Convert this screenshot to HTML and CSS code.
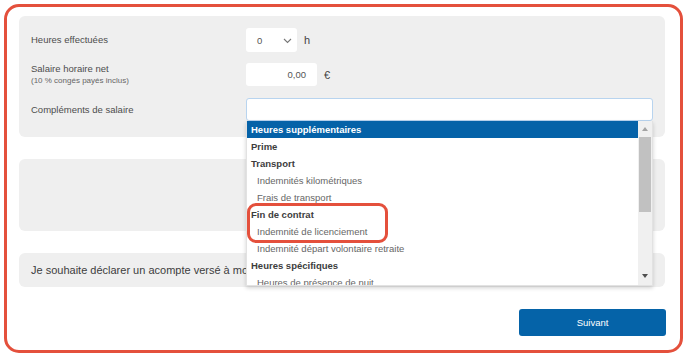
FILE: index.html
```html
<!DOCTYPE html>
<html lang="fr">
<head>
	<meta charset="UTF-8">
	<title>Salaire</title>
	<link rel="stylesheet" href="styles.css">
</head>
<body>
	<div class="frame">
		<div class="card form">
			<div class="row">
				<div class="label">Heures effectuées</div>
				<div class="field">
					<div class="select">0
						<svg class="chev" width="9" height="6" viewBox="0 0 9 6"><path d="M1 1l3.5 3.5L8 1" fill="none" stroke="#777" stroke-width="1.1"/></svg>
					</div>
					<span class="unit">h</span>
				</div>
			</div>
			<div class="row">
				<div class="label">Salaire horaire net<small>(10 % congés payés inclus)</small></div>
				<div class="field">
					<div class="input num">0,00</div>
					<span class="unit">€</span>
				</div>
			</div>
			<div class="row">
				<div class="label">Compléments de salaire</div>
				<div class="field combo">
					<div class="input wide"></div>
					<div class="dropdown">
						<ul class="options">
							<li class="group cur">Heures supplémentaires</li>
							<li class="group">Prime</li>
							<li class="group">Transport</li>
							<li class="opt">Indemnités kilométriques</li>
							<li class="opt">Frais de transport</li>
							<li class="group">Fin de contrat</li>
							<li class="opt">Indemnité de licenciement</li>
							<li class="opt">Indemnité départ volontaire retraite</li>
							<li class="group">Heures spécifiques</li>
							<li class="opt">Heures de présence de nuit</li>
						</ul>
						<div class="scroll">
							<span class="arrow up"></span>
							<span class="thumb"></span>
							<span class="arrow down"></span>
						</div>
						<div class="mark"></div>
					</div>
				</div>
			</div>
		</div>
		<div class="card empty"></div>
		<div class="card acompte">Je souhaite déclarer un acompte versé à mon salarié</div>
		<div class="actions"><button class="next">Suivant</button></div>
	</div>
</body>
</html>
```

FILE: styles.css
```css
/*reset*/
body{margin: 0; font-family: "Liberation Sans", Arial, sans-serif; background: #fff;}
ul{margin: 0; padding: 0;}
li{list-style: none;}

/*frame*/
.frame{margin: 4px 9px 0 4px; padding: 9px 15px 14px 12px; border: 3px solid #e4503c; border-radius: 15px; display: flex; flex-direction: column; gap: 22px;}

.card{background: #efefef; border-radius: 6px;}
.form{padding: 12px 12px 16px; display: flex; flex-direction: column; gap: 11px;}
.row{display: flex; align-items: center;}
.row + .row + .row{margin-top: 1px;}
.label{width: 215px; font-size: 9.5px; color: #4d4d4d; line-height: 12px;}
.label small{display: block; font-size: 8px; color: #666; line-height: 11px;}

.field{display: flex; align-items: center; position: relative;}
.select{width: 51px; height: 24px; background: #fff; border-radius: 3px; box-sizing: border-box; padding: 0 0 0 11px; font-size: 9.5px; color: #555; display: flex; align-items: center; position: relative;}
.chev{position: absolute; right: 5px; top: 10px;}
.input{height: 23px; background: #fff; border-radius: 3px; box-sizing: border-box; font-size: 9.5px; color: #555;}
.num{width: 71px; text-align: right; padding-right: 11px; line-height: 23px;}
.unit{font-size: 11px; color: #444; margin-left: 7px;}
.wide{width: 407px; border: 1px solid #b8d4ef;}

/*dropdown*/
.dropdown{position: absolute; top: 23px; left: 0; width: 407px; height: 165px; background: #fff; border: 1px solid #e2e2e2; border-top: none; box-sizing: border-box; box-shadow: 0 2px 4px rgba(0,0,0,.18); overflow: hidden; z-index: 10; display: flex;}
.options{width: 392px;}
.options li{height: 17px; line-height: 17px; font-size: 9.5px; white-space: nowrap;}
.group{font-weight: bold; color: #3d3d3d; padding-left: 4px;}
.opt{color: #666; padding-left: 10px;}
.options li.cur{background: #0562a8; color: #fff;}
.scroll{width: 14px; background: #f0f0f0; position: relative;}
.thumb{position: absolute; left: 1px; right: 1px; top: 16px; height: 75px; background: #c1c1c1;}
.arrow{position: absolute; left: 4px; width: 0; height: 0; border-left: 3.5px solid transparent; border-right: 3.5px solid transparent;}
.arrow.up{top: 6px; border-bottom: 4px solid #a3a3a3;}
.arrow.down{bottom: 7px; border-top: 4px solid #505050;}
.mark{position: absolute; left: 0; top: 82px; width: 141px; height: 40px; border: 3px solid #e4503c; border-radius: 9px; box-sizing: border-box;}

.empty{height: 72px;}
.acompte{height: 34px; padding-left: 12px; font-size: 11px; color: #3d3d3d; display: flex; align-items: center;}

.actions{display: flex; justify-content: flex-end; margin-right: -1px;}
.next{width: 147px; height: 27px; border: none; border-radius: 3px; background: #0563a8; color: #fff; font-family: inherit; font-size: 9.5px; cursor: pointer;}
```
